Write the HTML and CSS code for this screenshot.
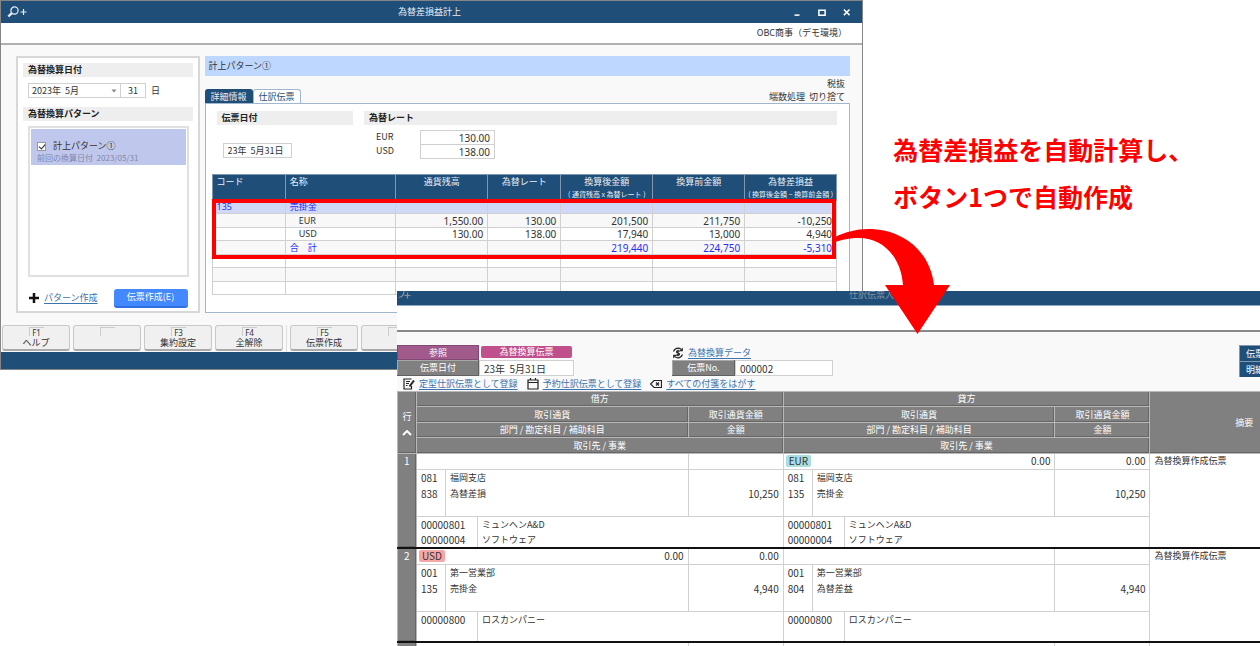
FILE: index.html
```html
<!DOCTYPE html>
<html lang="ja">
<head>
<meta charset="utf-8">
<title>為替差損益計上</title>
<link rel="stylesheet" href="styles.css">
</head>
<body>
<main class="scene">
  <section class="window window-calc">
    <header class="titlebar">
      <svg class="search-icon" viewBox="0 0 20 12" aria-hidden="true"><circle cx="7.500" cy="4.500" r="3.600"/><path class="handle" d="M4.800 7.200 1.300 10.500"/><path d="M13.500 6h6M16.500 3v6"/></svg>
      <h1 class="title">為替差損益計上</h1>
      <div class="controls">
        <button type="button" aria-label="最小化"><svg viewBox="0 0 8 8"><path d="M2 6.500h4"/></svg></button>
        <button type="button" aria-label="最大化"><svg viewBox="0 0 8 8"><path d="M1.500 2.500h5v4h-5z"/></svg></button>
        <button type="button" aria-label="閉じる"><svg viewBox="0 0 8 8"><path d="M1.500 2l4.500 4.500M6 2L1.500 6.500"/></svg></button>
      </div>
    </header>
    <div class="company">OBC商事（デモ環境）</div>
    <div class="calc-body">
      <aside class="side">
        <h2 class="head">為替換算日付</h2>
        <div class="date-row">
          <div class="select-wrap">
            <select aria-label="年月"><option>2023年&nbsp; 5月</option></select>
            <svg viewBox="0 0 6 4" aria-hidden="true"><path d="M0.500 0.500h5L3 3.500z"/></svg>
          </div>
          <input class="day" id="day" type="text" value="31">
          <label for="day">日</label>
        </div>
        <h2 class="head">為替換算パターン</h2>
        <div class="pattern-list">
          <div class="pattern">
            <label class="pattern-name"><input type="checkbox" checked>計上パターン①</label>
            <p class="pattern-note">前回の換算日付&nbsp; 2023/05/31</p>
          </div>
        </div>
        <div class="side-foot">
          <svg viewBox="0 0 10 10" aria-hidden="true"><path d="M5 0v10M0 5h10"/></svg>
          <a href="#">パターン作成</a>
          <button class="primary" type="button">伝票作成(E)</button>
        </div>
      </aside>
      <div class="detail">
        <div class="pattern-title">計上パターン①</div>
        <div class="tab-row">
          <div class="tabs">
            <button class="tab tab-on" type="button">詳細情報</button>
            <button class="tab" type="button">仕訳伝票</button>
          </div>
          <div class="notes">税抜<br>端数処理&nbsp; 切り捨て</div>
        </div>
        <div class="panel">
          <div class="conditions">
            <div class="cond-date">
              <h3 class="head">伝票日付</h3>
              <input type="text" aria-label="伝票日付" value="23年&nbsp; 5月31日">
            </div>
            <div class="cond-rate">
              <h3 class="head">為替レート</h3>
              <div class="rate"><label for="eur">EUR</label><input id="eur" type="text" value="130.00"></div>
              <div class="rate"><label for="usd">USD</label><input id="usd" type="text" value="138.00"></div>
            </div>
          </div>
          <div class="grid-wrap">
            <table class="grid">
              <colgroup><col class="g-code"><col class="g-name"><col class="g-wide"><col class="g-code"><col class="g-wide"><col class="g-wide"><col class="g-wide"></colgroup>
              <thead><tr><th class="left">コード</th><th class="left">名称</th><th>通貨残高</th><th>為替レート</th><th>換算後金額<small>( 通貨残高 x 為替レート )</small></th><th>換算前金額</th><th>為替差損益<small>( 換算後金額 − 換算前金額 )</small></th></tr></thead>
              <tbody>
                <tr class="account"><td>135</td><td>売掛金</td><td></td><td></td><td></td><td></td><td></td></tr>
                <tr><td></td><td class="sub">EUR</td><td>1,550.00</td><td>130.00</td><td>201,500</td><td>211,750</td><td>-10,250</td></tr>
                <tr><td></td><td class="sub">USD</td><td>130.00</td><td>138.00</td><td>17,940</td><td>13,000</td><td>4,940</td></tr>
                <tr class="total"><td></td><td>合　計</td><td></td><td></td><td>219,440</td><td>224,750</td><td>-5,310</td></tr>
                <tr><td></td><td></td><td></td><td></td><td></td><td></td><td></td></tr>
                <tr><td></td><td></td><td></td><td></td><td></td><td></td><td></td></tr>
                <tr><td></td><td></td><td></td><td></td><td></td><td></td><td></td></tr>
              </tbody>
            </table>
            <div class="marker"></div>
          </div>
        </div>
      </div>
    </div>
    <div class="keys">
      <button type="button"><kbd>F1</kbd>ヘルプ</button>
      <button type="button" aria-label="F2"><kbd></kbd></button>
      <button type="button"><kbd>F3</kbd>集約設定</button>
      <button type="button"><kbd>F4</kbd>全解除</button>
      <span class="key-gap"></span>
      <button type="button"><kbd>F5</kbd>伝票作成</button>
      <button type="button" aria-label="F6"><kbd></kbd></button>
    </div>
    <footer class="status"></footer>
  </section>

  <section class="window-slip">
    <div class="slip">
      <header class="slip-title">
        <svg class="search-icon" viewBox="0 0 20 12" aria-hidden="true"><path d="M7 0c0 3-1.500 6-5 6.500"/><path d="M7.500 4.500h6M10.500 1.500v6"/></svg>
        <h2 class="title">仕訳伝票入力</h2>
      </header>
      <div class="slip-blank"></div>
      <div class="slip-body">
        <div class="slip-head">
          <div class="slip-left">
            <span class="badge-view">参照</span><span class="badge-kind">為替換算伝票</span>
            <label class="field-label" for="slip-date">伝票日付</label><input id="slip-date" type="text" value="23年&nbsp; 5月31日">
          </div>
          <div class="slip-mid">
            <p class="source"><svg class="line-icon" viewBox="0 0 12 12"><path d="M1.500 4.500A4.800 4.800 0 0 1 9 2.200M10.500 7.500A4.800 4.800 0 0 1 3 9.800"/><path class="solid" d="M10.800 0.500v3.700H7.200zM1.200 11.500V7.800h3.600z"/><path d="M7.800 4.300C6.500 3.400 4.500 3.700 4.500 4.900C4.500 6.300 7.600 5.700 7.600 7.200C7.600 8.400 5.400 8.600 4.200 7.700M6 2.800v6.400"/></svg><a href="#">為替換算データ</a></p>
            <label class="field-label" for="slip-no">伝票No.</label><input id="slip-no" type="text" value="000002">
          </div>
          <div class="slip-side"><button type="button">伝票</button><button type="button">明細</button></div>
        </div>
        <nav class="slip-links">
          <span><svg class="line-icon" viewBox="0 0 12 12"><path d="M8.500 8v3H1V1h7.500M3 3.500h4M3 5.500h3M3 7.500h1.500"/><path class="pen" d="M11 2.500 6.500 8.500"/></svg><a href="#">定型仕訳伝票として登録</a></span>
          <span><svg class="line-icon" viewBox="0 0 12 12"><path d="M1 2h10v9H1zM1 4.500h10M3.500 0v2.500M8.500 0v2.500"/></svg><a href="#">予約仕訳伝票として登録</a></span>
          <span><svg class="line-icon" viewBox="0 0 12 12"><path d="M4 2.500h7.500v7H4L.600 6zM6 4.500l3 3M9 4.500l-3 3"/></svg><a href="#">すべての付箋をはがす</a></span>
        </nav>
        <table class="journal">
          <colgroup><col class="j-no"><col class="j-c1"><col class="j-c2"><col class="j-c3"><col class="j-amt"><col class="j-c1"><col class="j-c2"><col class="j-c3"><col class="j-amt"><col class="j-memo"></colgroup>
          <thead>
            <tr><th rowspan="4" class="no">行<svg viewBox="0 0 10 6" aria-hidden="true"><path d="M1 5l4-4 4 4"/></svg></th><th colspan="4">借方</th><th colspan="4">貸方</th><th rowspan="4">摘要</th></tr>
            <tr><th colspan="3">取引通貨</th><th>取引通貨金額</th><th colspan="3">取引通貨</th><th>取引通貨金額</th></tr>
            <tr><th colspan="3">部門 / 勘定科目 / 補助科目</th><th>金額</th><th colspan="3">部門 / 勘定科目 / 補助科目</th><th>金額</th></tr>
            <tr><th colspan="4">取引先 / 事業</th><th colspan="4">取引先 / 事業</th></tr>
          </thead>
          <tbody>
            <tr class="cur"><th rowspan="3" class="row-no">1</th><td colspan="3"></td><td></td><td colspan="3"><div class="cur-line"><span class="chip chip-eur">EUR</span><span>0.00</span></div></td><td class="num">0.00</td><td rowspan="3" class="memo">為替換算作成伝票</td></tr>
            <tr class="acct"><td class="code">081<br>838</td><td colspan="2" class="name">福岡支店<br>為替差損</td><td class="num"><br>10,250</td><td class="code">081<br>135</td><td colspan="2" class="name">福岡支店<br>売掛金</td><td class="num"><br>10,250</td></tr>
            <tr class="partner"><td colspan="2" class="code">00000801<br>00000004</td><td colspan="2" class="name">ミュンヘンA&amp;D<br>ソフトウェア</td><td colspan="2" class="code">00000801<br>00000004</td><td colspan="2" class="name">ミュンヘンA&amp;D<br>ソフトウェア</td></tr>
          </tbody>
          <tbody>
            <tr class="cur"><th rowspan="3" class="row-no">2</th><td colspan="3"><div class="cur-line"><span class="chip chip-usd">USD</span><span>0.00</span></div></td><td class="num">0.00</td><td colspan="3"></td><td></td><td rowspan="3" class="memo">為替換算作成伝票</td></tr>
            <tr class="acct"><td class="code">001<br>135</td><td colspan="2" class="name">第一営業部<br>売掛金</td><td class="num"><br>4,940</td><td class="code">001<br>804</td><td colspan="2" class="name">第一営業部<br>為替差益</td><td class="num"><br>4,940</td></tr>
            <tr class="partner"><td colspan="2" class="code">00000800</td><td colspan="2" class="name">ロスカンパニー</td><td colspan="2" class="code">00000800</td><td colspan="2" class="name">ロスカンパニー</td></tr>
          </tbody>
          <tbody>
            <tr class="cur"><th class="row-no"></th><td colspan="3"></td><td></td><td colspan="3"></td><td></td><td></td></tr>
          </tbody>
        </table>
      </div>
    </div>
  </section>

  <svg class="arrow" viewBox="0 0 116 106" aria-hidden="true"><path d="M0 8C10 3 22 0 33 0C68 0 95 22 99 56L115 56L82.500 105L50 56L68 56C66 28 48 9 24 9C14 9 7 11 0 13Z"/></svg>
  <p class="callout">為替差損益を自動計算し、<br>ボタン1つで自動作成</p>
</main>
</body>
</html>
```
FILE: styles.css
```css
:root {
  --navy: #1f4e79;
  --link: #3b73ad;
  --line: #d0d0d0;
  --grey: #808080;
}
* { box-sizing: border-box; }
body {
  margin: 0;
  background: #fff;
  color: #333;
  font: 9px/14px "Noto Sans CJK JP", sans-serif;
}
h1, h2, h3, p { margin: 0; font-size: inherit; }
button, input, select { font: inherit; color: inherit; border-radius: 0; }
button { padding: 0; border: 0; background: none; }
input, select { margin: 0; padding: 0 4px; border: 1px solid var(--line); background: #fff; min-width: 0; }
a { color: var(--link); text-decoration: underline; text-underline-offset: 2px; }
svg { flex: none; }

.scene { position: relative; min-height: 100vh; overflow: hidden; }

/* 為替差損益計上 */
.window-calc {
  position: absolute;
  top: 0;
  left: 0;
  width: 68.5%;
  border: 1px solid #858585;
  background: #f9f9f9;
}
.titlebar {
  display: grid;
  grid-template-columns: 1fr auto 1fr;
  align-items: center;
  height: 22px;
  padding: 0 10px 0 6px;
  background: var(--navy);
  color: #e8eef5;
}
.title { font-weight: 400; }
.search-icon { width: 20px; height: 12px; fill: none; stroke: #e8eef5; stroke-width: 1.200; }
.search-icon .handle { stroke-width: 2.400; }
.controls { display: flex; justify-content: flex-end; gap: 15px; }
.controls button { display: flex; width: 10px; height: 10px; }
.controls svg { width: 10px; height: 10px; fill: none; stroke: #fff; stroke-width: 1.200; }
.company {
  height: 22px;
  padding: 3px 15px 0 0;
  background: #fff;
  border-bottom: 2px solid #b0b0b0;
  text-align: right;
}
.calc-body { display: flex; gap: 5px; padding: 11px 12px 12px 15px; }
.side {
  flex: 0 0 22%;
  height: 257px;
  display: flex;
  flex-direction: column;
  padding: 5px 5px 3px 5px;
  border: 2px solid #d8d8d8;
  background: #fff;
}
.head {
  padding: 0 5px;
  height: 14px;
  line-height: 14px;
  background: #eee;
  color: #222;
  font-weight: 700;
}
.date-row { display: flex; align-items: center; margin: 6px 5px 9px; height: 15px; }
.select-wrap { position: relative; width: 93px; height: 15px; }
.select-wrap select { display: block; width: 100%; height: 15px; padding: 0 3px; line-height: 13px; appearance: none; }
.select-wrap svg { position: absolute; right: 4px; top: 6px; width: 6px; height: 4px; fill: #888; }
.day { width: 26px; height: 15px; margin: 0 5px 0 -1px; text-align: center; }
.pattern-list {
  flex: 1;
  margin: 5px 4px 11px 5px;
  padding: 1px;
  border: 2px solid #e0e0e0;
}
.pattern { padding: 10px 6px 0; height: 36px; background: #bfc8ec; }
.pattern-name { display: flex; align-items: center; gap: 7px; height: 14px; }
.pattern-name input {
  appearance: none;
  display: grid;
  width: 9px;
  height: 9px;
  padding: 0;
  border: 1px solid #999;
}
.pattern-name input:checked::before {
  content: "";
  width: 3px;
  height: 5px;
  margin: 0 2px;
  border: solid #222;
  border-width: 0 1px 1px 0;
  transform: rotate(40deg);
}
.pattern-note { color: #7f86ac; font-size: 8px; line-height: 10px; }
.side-foot { display: flex; align-items: center; gap: 5px; padding: 0 5px 0 6px; height: 20px; }
.side-foot svg { width: 10px; height: 10px; stroke: #111; stroke-width: 2.500; }
.primary {
  width: 74px;
  height: 19px;
  margin-left: auto;
  border-bottom: 2px solid #2f6fe0;
  border-radius: 3px;
  background: #4488ff;
  color: #fff;
}

.detail { flex: 1; min-width: 0; display: flex; flex-direction: column; }
.pattern-title { height: 20px; padding: 3px 4px; background: #bdd7ff; }
.tab-row { display: flex; justify-content: space-between; align-items: flex-end; height: 27px; }
.tabs { display: flex; }
.tab {
  width: 48px;
  height: 14px;
  line-height: 13px;
  border: 1px solid #9fb8d0;
  border-bottom: 0;
  border-radius: 3px 3px 0 0;
  background: #fff;
  color: var(--navy);
}
.tab-on { background: var(--navy); border-color: var(--navy); color: #e8eef5; }
.notes { padding-right: 5px; line-height: 13px; text-align: right; }
.panel { flex: 1; padding: 7px 12px 0 6px; border: 1px solid #9fb8d0; background: #fff; }
.conditions { display: flex; gap: 11px; padding-left: 5px; height: 63px; }
.cond-date { flex: 0 0 22%; }
.cond-date input { display: block; width: 69px; height: 15px; margin: 18px 0 0 6px; }
.cond-rate { flex: 1; }
.cond-rate .head { margin-bottom: 5px; }
.rate { display: flex; height: 14px; padding-left: 12px; }
.rate label { width: 44px; }
.rate input {
  width: 75px;
  height: 15px;
  font: 10px/13px "Noto Sans", sans-serif;
  text-align: right;
}

.grid-wrap { position: relative; }
.grid { width: 100%; table-layout: fixed; border-collapse: collapse; }
.g-code { width: 11.7%; }
.g-name { width: 17.7%; }
.g-wide { width: 14.7%; }
.grid th {
  height: 26px;
  padding: 0;
  border: 1px solid #7f97af;
  background: var(--navy);
  color: #e8eef5;
  font-weight: 400;
  line-height: 13px;
  vertical-align: top;
}
.grid small { display: block; font-size: 7px; line-height: 12px; white-space: nowrap; }
.grid td {
  height: 13px;
  padding: 0 4px;
  border: 1px solid var(--line);
  background: #fff;
  font: 10px/12px "Noto Sans", "Noto Sans CJK JP", sans-serif;
  text-align: right;
}
.grid tr:nth-child(even) td { height: 14px; background: #f8f8f8; }
.grid th.left { padding-left: 4px; text-align: left; }
.grid td:nth-child(-n+2) { font-size: 9px; text-align: left; }
.grid td.sub { padding-left: 13px; }
.grid .account td { background: #cfd8f6; color: #2b2bff; }
.grid .total td { color: #2b2bff; }
.marker { position: absolute; left: 0; right: 1px; top: 25px; height: 60px; border: 4px solid #f00; }

.keys { display: flex; gap: 3px; height: 27px; padding-left: 1px; overflow: hidden; }
.keys button {
  flex: 0 0 68px;
  display: flex;
  flex-direction: column;
  align-items: center;
  height: 26px;
  border: 1px solid #c8c8c8;
  border-bottom: 2px solid #aaa;
  border-radius: 3px;
  background: #f0f0f0;
  line-height: 13px;
}
.keys kbd {
  width: 15px;
  height: 9px;
  margin-top: 1px;
  border: solid #ccc;
  border-width: 1px 0 0 1px;
  font: 8px/9px "Noto Sans", sans-serif;
}
.key-gap { width: 1px; background: #ddd; }
.status { height: 17px; background: var(--navy); }

/* 仕訳伝票 */
.window-slip {
  position: absolute;
  top: 291px;
  left: 31.5%;
  right: 0;
  bottom: 0;
  overflow: hidden;
  background: #fff;
}
.slip { width: 111%; }
.slip-title {
  display: grid;
  grid-template-columns: 1fr auto 1fr;
  height: 15px;
  line-height: 8px;
  overflow: hidden;
  background: var(--navy);
  border-bottom: 1px solid #8fa9c6;
  color: #8793a0;
}
.slip-title .search-icon { stroke: #8793a0; }
.slip-blank { height: 26px; border-bottom: 2px solid #888; }
.slip-body { padding-right: 16px; background: #f9f9f9; }
.slip-head { display: flex; padding-top: 13px; }
.slip-left, .slip-mid { display: grid; grid-auto-rows: 15px 16px; }
.slip-left { grid-template-columns: 82px 95px; margin-right: 98px; }
.slip-mid { grid-template-columns: 63px 98px; }
.source { grid-column: 1 / -1; display: flex; align-items: center; gap: 4px; }
.badge-view, .field-label {
  color: #fff;
  line-height: 15px;
  text-align: center;
  box-shadow: inset -1px -1px #606060, inset 1px 1px #a8a8a8;
}
.badge-view { background: #a05a8c; box-shadow: inset 0 0 0 1px #834871; }
.field-label { background: var(--grey); }
.badge-kind {
  width: 91px;
  height: 12px;
  margin: 1px 2px;
  border-radius: 2px;
  background: #c0508c;
  color: #fff;
  line-height: 12px;
  text-align: center;
}
.slip-head input { width: 100%; height: 16px; line-height: 14px; font-size: 10px; }
.slip-side { display: flex; flex-direction: column; width: 100px; margin-left: auto; }
.slip-side button {
  height: 16px;
  padding-left: 6px;
  border: 1px solid #7f97af;
  border-width: 1px 0 0 1px;
  background: var(--navy);
  color: #fff;
  text-align: left;
}
.slip-links { display: flex; gap: 9px; height: 14px; padding-left: 6px; }
.slip-links span { display: flex; align-items: center; gap: 4px; }
.line-icon { width: 12px; height: 12px; fill: none; stroke: #222; stroke-width: 1.200; }
.line-icon .pen { stroke-width: 2; }
.line-icon .solid { fill: #222; stroke: none; }

.journal { width: 100%; table-layout: fixed; border-collapse: collapse; background: #fff; }
.j-no { width: 19px; }
.j-c1 { width: 29px; }
.j-c2 { width: 32px; }
.j-c3 { width: 22.4%; }
.j-amt { width: 95px; }
.journal th {
  height: 15px;
  padding: 0;
  border: 1px solid #b8b8b8;
  background: var(--grey);
  box-shadow: inset -1px -1px #666;
  color: #fff;
  font-weight: 400;
  line-height: 14px;
}
.journal thead tr:nth-child(even) th { height: 16px; }
.journal .no svg { display: block; width: 10px; height: 6px; margin: 6px auto 0; fill: none; stroke: #fff; stroke-width: 2; }
.journal td { padding: 0 4px; border: 1px solid var(--line); vertical-align: top; }
.journal tbody { border-bottom: 2px solid #111; }
.journal .row-no { vertical-align: top; font-size: 10px; }
.journal .cur td { height: 16px; line-height: 14px; }
.acct td { height: 47px; line-height: 16px; }
.partner td { height: 31px; line-height: 15px; }
.journal .num, .journal .code, .cur-line { font-size: 10px; }
.journal .num { text-align: right; }
.cur-line { display: flex; justify-content: space-between; align-items: center; height: 14px; }
.chip { height: 12px; margin-left: -2px; padding: 0 3px; border-radius: 2px; line-height: 12px; }
.chip-eur { background: #a8dde2; }
.chip-usd { background: #f8a5a5; }

/* 注釈 */
.arrow { position: absolute; top: 229px; left: 66.3%; width: 116px; height: 106px; fill: #f00; }
.callout {
  position: absolute;
  top: 126px;
  left: 70.9%;
  color: #f00;
  font-size: 25px;
  font-weight: 700;
  line-height: 47px;
  white-space: nowrap;
}
```
